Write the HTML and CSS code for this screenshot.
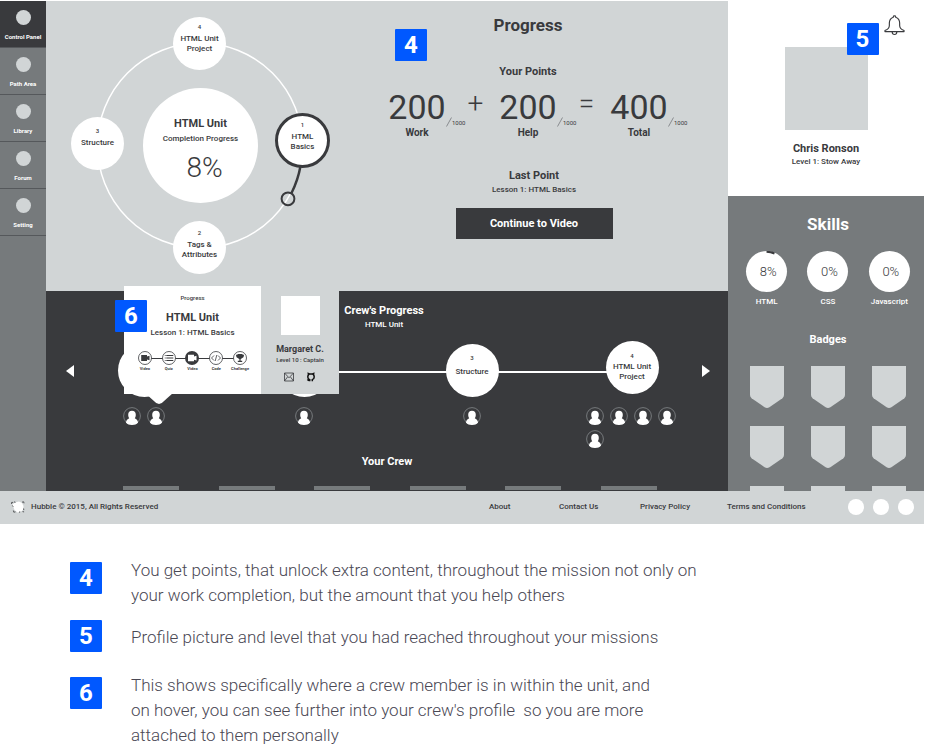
FILE: index.html
```html
<!DOCTYPE html>
<html lang="en">
<head>
<meta charset="utf-8">
<title>Hubble Control Panel</title>
<link rel="stylesheet" href="styles.css">
</head>
<body>
<svg class="defs" aria-hidden="true">
  <symbol id="person" viewBox="0 0 18 18">
    <circle cx="9" cy="9" r="8.4" fill="none" stroke="#76797c" stroke-width="1"/>
    <path fill="#fff" d="M9 3.800c2.400 0 3.800 1.600 3.800 3.900 0 1.500-.4 2.600-1 3.600 1.600.7 2.900 2.200 3.300 4.100C13.600 17.200 11.400 17.900 9 17.900s-4.600-.7-6.100-2.500c.4-1.900 1.700-3.400 3.300-4.100-.6-1-1-2.100-1-3.600C5.200 5.400 6.600 3.800 9 3.800z"/>
  </symbol>
  <symbol id="shield" viewBox="0 0 34 42">
    <path fill="#d1d5d6" d="M0 0h34v29q0 2-1.600 3.200L19.400 41.200q-2.400 1.600-4.800 0L1.600 32.200Q0 31 0 29z"/>
  </symbol>
</svg>

<div class="app">
  <nav class="sidebar" aria-label="Main">
    <a class="nav-item nav-item-active" href="#"><span class="nav-dot"></span>Control Panel</a>
    <a class="nav-item" href="#"><span class="nav-dot"></span>Path Area</a>
    <a class="nav-item" href="#"><span class="nav-dot"></span>Library</a>
    <a class="nav-item" href="#"><span class="nav-dot"></span>Forum</a>
    <a class="nav-item" href="#"><span class="nav-dot"></span>Setting</a>
  </nav>

  <main class="main">
    <section class="overview">
      <div class="orbit">
        <svg class="orbit-lines" viewBox="0 0 294 290" aria-hidden="true">
          <circle cx="154" cy="144.500" r="102.500" fill="none" stroke="#fff" stroke-width="1.500"/>
          <path d="M254.500 165 Q252 179 245.500 192" fill="none" stroke="#393a3d" stroke-width="2.500"/>
          <circle cx="242" cy="197.800" r="6.400" fill="none" stroke="#393a3d" stroke-width="2"/>
        </svg>
        <div class="orbit-core">
          <h2 class="title">HTML Unit</h2>
          <p class="small">Completion Progress</p>
          <p class="percent">8%</p>
        </div>
        <a class="node node-top" href="#"><span class="num">4</span>HTML Unit<br>Project</a>
        <a class="node node-right" href="#"><span class="num">1</span>HTML<br>Basics</a>
        <a class="node node-bottom" href="#"><span class="num">2</span>Tags &amp;<br>Attributes</a>
        <a class="node node-left" href="#"><span class="num">3</span>Structure</a>
      </div>

      <div class="progress">
        <span class="marker marker-points">4</span>
        <div class="progress-head">
          <h1 class="heading">Progress</h1>
          <h2 class="subheading">Your Points</h2>
        </div>
        <div class="stats">
          <div class="stat"><span class="stat-value">200</span><span class="stat-max"><svg viewBox="0 0 6 10" aria-hidden="true"><path d="M.5 9.500 5.500.5"/></svg>1000</span><span class="stat-label">Work</span></div>
          <span class="operator">+</span>
          <div class="stat"><span class="stat-value">200</span><span class="stat-max"><svg viewBox="0 0 6 10" aria-hidden="true"><path d="M.5 9.500 5.500.5"/></svg>1000</span><span class="stat-label">Help</span></div>
          <span class="operator">=</span>
          <div class="stat"><span class="stat-value">400</span><span class="stat-max"><svg viewBox="0 0 6 10" aria-hidden="true"><path d="M.5 9.500 5.500.5"/></svg>1000</span><span class="stat-label">Total</span></div>
        </div>
        <h2 class="subheading">Last Point</h2>
        <p class="small">Lesson 1: HTML Basics</p>
        <button class="continue" type="button">Continue to Video</button>
      </div>
    </section>

    <section class="crew">
      <div class="crew-head">
        <h2 class="subheading">Crew's Progress</h2>
        <p class="small">HTML Unit</p>
      </div>
      <div class="track">
        <button class="arrow arrow-prev" type="button" aria-label="Previous"></button>
        <div class="stages">
          <div class="stage">
            <div class="stage-head"><div class="node"></div></div>
            <div class="avatars">
              <svg><use href="#person"/></svg>
              <svg><use href="#person"/></svg>
            </div>
          </div>
          <div class="stage">
            <div class="stage-head"><div class="node"></div></div>
            <div class="avatars"><svg><use href="#person"/></svg></div>
          </div>
          <div class="stage">
            <div class="stage-head"><div class="node"><span class="num">3</span>Structure</div></div>
            <div class="avatars"><svg><use href="#person"/></svg></div>
          </div>
          <div class="stage stage-raised">
            <div class="stage-head"><div class="node"><span class="num">4</span>HTML Unit<br>Project</div></div>
            <div class="avatars">
              <svg><use href="#person"/></svg>
              <svg><use href="#person"/></svg>
              <svg><use href="#person"/></svg>
              <svg><use href="#person"/></svg>
              <svg><use href="#person"/></svg>
            </div>
          </div>
        </div>
        <button class="arrow arrow-next" type="button" aria-label="Next"></button>
      </div>
      <h2 class="subheading">Your Crew</h2>
      <div class="crew-cards">
        <span></span><span></span><span></span><span></span><span></span><span></span>
      </div>

      <div class="popover">
        <span class="marker marker-crew">6</span>
        <div class="popover-unit">
          <p class="tiny">Progress</p>
          <h3 class="title">HTML Unit</h3>
          <p class="small">Lesson 1: HTML Basics</p>
          <ol class="steps">
            <li><svg viewBox="0 0 14 14"><circle cx="7" cy="7" r="6.500" fill="#fff" stroke="#393a3d" stroke-width=".8"/><path fill="#393a3d" d="M3.200 4h5.800v1.500l2.500-.7v4.400L9 8.500V10H3.200z"/></svg>Video</li>
            <li><svg viewBox="0 0 14 14"><circle cx="7" cy="7" r="6.500" fill="#fff" stroke="#393a3d" stroke-width=".8"/><path stroke="#393a3d" stroke-width="1" d="M2.800 4.500h.8m.7 0h7M2.800 7h.8m.7 0h7M2.800 9.500h.8m.7 0h7"/></svg>Quiz</li>
            <li><svg viewBox="0 0 14 14"><circle cx="7" cy="7" r="7" fill="#393a3d"/><path fill="#fff" d="M3 3.800h6v1.800l2.500-.8v4.700L9 8.800v1.400H3z"/></svg>Video</li>
            <li><svg viewBox="0 0 14 14"><circle cx="7" cy="7" r="6.500" fill="#fff" stroke="#393a3d" stroke-width=".8"/><path fill="none" stroke="#393a3d" stroke-width=".8" d="M5 4.500 2.500 7 5 9.500M9 4.500 11.500 7 9 9.500M7.800 4 6.200 10"/></svg>Code</li>
            <li><svg viewBox="0 0 14 14"><circle cx="7" cy="7" r="6.500" fill="#fff" stroke="#393a3d" stroke-width=".8"/><path fill="#393a3d" d="M4.500 3h5v.8H11c0 2-.8 3.200-2.200 3.500-.3.500-.7.800-1.200 1v1.400h1.600V11H4.800V9.700h1.600V8.300c-.5-.2-.9-.5-1.200-1C3.800 7 3 5.800 3 3.800h1.500z"/></svg>Challenge</li>
          </ol>
        </div>
        <div class="popover-person">
          <div class="popover-photo"></div>
          <h3 class="person-name">Margaret C.</h3>
          <p class="person-level">Level 10 : Captain</p>
          <div class="contacts">
            <a href="#" aria-label="Email"><svg viewBox="0 0 10 10"><path fill="none" stroke="#393a3d" stroke-width=".8" d="M.5 1h9v8h-9zM.5 1 5 5.800 9.500 1M.5 9l3-4M9.500 9l-3-4"/></svg></a>
            <a href="#" aria-label="GitHub"><svg viewBox="0 0 10 10"><path fill="none" stroke="#111" stroke-width="1.500" d="M3.700 9.200V7.600C2.500 7.200 1.800 6.400 1.800 4.900c0-.8.2-1.400.6-1.900L2.300 1.500l1.500.6c.8-.2 1.600-.2 2.400 0l1.500-.6L7.600 3c.4.500.6 1.100.6 1.900 0 1.500-.7 2.300-1.900 2.700v1.600M3.500 8.500C2.300 8.800 1.900 8 1.300 7.500"/></svg></a>
          </div>
        </div>
      </div>
    </section>
  </main>

  <aside class="side">
    <section class="profile">
      <button class="bell" type="button" aria-label="Notifications">
        <svg viewBox="0 0 22 22"><path fill="none" stroke="#393a3d" stroke-width="1.200" stroke-linejoin="round" d="M1 17.400v-1.200c3-1 4.600-2.200 4.600-5.200V8.500c0-3.600 1.600-5.400 4.200-6.200V1.500c0-1 2.400-1 2.400 0v.8c2.600.8 4.200 2.600 4.200 6.200V11c0 3 1.600 4.200 4.600 5.200v1.200zM8.500 17.600c.2 3.800 4.800 3.800 5 0"/></svg>
      </button>
      <div class="photo"><span class="marker marker-profile">5</span></div>
      <h2 class="profile-name">Chris Ronson</h2>
      <p class="small">Level 1: Stow Away</p>
    </section>
    <section class="skills">
      <h2 class="heading">Skills</h2>
      <div class="skill-row">
        <div class="skill"><span class="skill-disc">8%<svg viewBox="0 0 41 41" aria-hidden="true"><path d="M20.500 .8 A19.700 19.700 0 0 1 28.500 2.500" fill="none" stroke="#393a3d" stroke-width="2"/></svg></span>HTML</div>
        <div class="skill"><span class="skill-disc">0%</span>CSS</div>
        <div class="skill"><span class="skill-disc">0%</span>Javascript</div>
      </div>
      <h2 class="subheading">Badges</h2>
      <div class="badges">
        <svg><use href="#shield"/></svg><svg><use href="#shield"/></svg><svg><use href="#shield"/></svg>
        <svg><use href="#shield"/></svg><svg><use href="#shield"/></svg><svg><use href="#shield"/></svg>
        <svg><use href="#shield"/></svg><svg><use href="#shield"/></svg><svg><use href="#shield"/></svg>
      </div>
    </section>
  </aside>

  <footer class="footer">
    <svg class="logo" viewBox="0 0 14 12" aria-hidden="true">
      <path fill="#fff" d="M1.500 3.500 4 1.500l4-1 3 1.500 1.500 3-.5 4-2 1.500-3.500 1L3.500 9z"/>
      <path fill="none" stroke="#55575a" stroke-width="1" d="M.6 3V1.400h1.600M3 .9l1.500.4M11 1.200l1.700-.4.300 1.500M1.400 4.500l.8 1.200M2.400 9.500l.4 1.700 1.700-.3M12.600 7.500l.2 1.600M11.500 10.600l1.600.3M8 11.200l1.200-.3"/>
    </svg>
    <span class="copyright">Hubble © 2015, All Rights Reserved</span>
    <nav class="footer-links" aria-label="Footer">
      <a href="#">About</a><a href="#">Contact Us</a><a href="#">Privacy Policy</a><a href="#">Terms and Conditions</a>
    </nav>
    <div class="social">
      <a href="#" aria-label="Facebook"></a><a href="#" aria-label="Twitter"></a><a href="#" aria-label="Instagram"></a>
    </div>
  </footer>
</div>

<div class="notes">
  <div class="note"><span class="marker">4</span><p>You get points, that unlock extra content, throughout the mission not only on<br>your work completion, but the amount that you help others</p></div>
  <div class="note note-single"><span class="marker">5</span><p>Profile picture and level that you had reached throughout your missions</p></div>
  <div class="note"><span class="marker">6</span><p>This shows specifically where a crew member is in within the unit, and<br>on hover, you can see further into your crew's profile&nbsp; so you are more<br>attached to them personally</p></div>
</div>
</body>
</html>
```
FILE: styles.css
```css
* { box-sizing: border-box; }

body {
  margin: 0;
  background: #fff;
  color: #393a3d;
  font-family: Roboto, "Liberation Sans", sans-serif;
  font-size: 8px;
  line-height: 10px;
}

h1, h2, h3, p, ol { margin: 0; padding: 0; }
a { color: inherit; text-decoration: none; }
button { border: 0; padding: 0; font: inherit; cursor: pointer; }
svg { display: block; }
.defs { position: absolute; width: 0; height: 0; }

/* Shared text */
.heading { font-size: 17px; line-height: 20px; font-weight: 700; }
.subheading { font-size: 11px; line-height: 16px; font-weight: 700; }
.title { font-size: 11px; line-height: 18px; font-weight: 700; }
.small { font-size: 8px; line-height: 12px; font-weight: 500; }
.tiny { font-size: 6px; line-height: 8px; font-weight: 500; }

.marker {
  display: flex;
  align-items: center;
  justify-content: center;
  flex: none;
  width: 32px;
  height: 32px;
  border-radius: 1px;
  background: #0058ff;
  color: #fff;
  font-size: 24px;
  line-height: 32px;
  font-weight: 700;
}

/* Frame */
.app {
  display: grid;
  grid-template-columns: 46px 1fr 196px;
  margin-right: 2px;
  padding-top: 1px;
}

.sidebar { background: #767a7c; color: #fff; }
.nav-item {
  display: flex;
  flex-direction: column;
  align-items: center;
  gap: 8px;
  height: 47px;
  padding-top: 9px;
  border-bottom: 1px solid #55585b;
  font-size: 6px;
  line-height: 8px;
  font-weight: 700;
  white-space: nowrap;
}
.nav-item-active { background: #393a3d; }
.nav-dot { width: 15px; height: 15px; border-radius: 50%; background: #d1d5d6; }

/* Unit overview */
.overview { display: flex; height: 290px; background: #d1d5d6; }
.orbit { position: relative; flex: none; width: 294px; height: 290px; text-align: center; }
.orbit-lines { width: 294px; height: 290px; }

.node {
  display: flex;
  flex-direction: column;
  align-items: center;
  justify-content: center;
  width: 53px;
  height: 53px;
  border-radius: 50%;
  background: #fff;
  color: #393a3d;
  font-weight: 500;
  text-align: center;
  white-space: nowrap;
}
.num { font-size: 6px; line-height: 12px; }
.orbit .node { position: absolute; display: block; padding: 4px 0 0; }
.orbit .num { display: block; margin-bottom: 1px; }
.orbit .node-top { left: 127px; top: 16px; }
.orbit .node-bottom { left: 127px; top: 220px; padding-top: 6px; }
.orbit .node-left { left: 25px; top: 116px; padding-top: 8px; }
.orbit .node-right { left: 229px; top: 112px; width: 55px; height: 55px; border: 3px solid #393a3d; padding-top: 3px; }
.orbit-core {
  position: absolute;
  left: 97px;
  top: 87px;
  width: 115px;
  height: 115px;
  padding-top: 27px;
  border-radius: 50%;
  background: #fff;
}
.percent { margin-top: 6px; padding-left: 8px; font-size: 28px; line-height: 34px; font-weight: 300; }

.progress { position: relative; flex: 1; padding-top: 14px; text-align: center; }
.marker-points { position: absolute; left: 55px; top: 28px; }
.progress-head { display: flex; flex-direction: column; gap: 29px; padding-right: 12px; }
.stats { display: flex; justify-content: center; padding-left: 8px; margin: 7px 0 29px; }
.stat { display: grid; grid-template-columns: 58px 20px; }
.stat-value { font-size: 34px; line-height: 40px; text-align: center; }
.stat-max { align-self: end; display: flex; align-items: flex-end; font-size: 6px; line-height: 8px; }
.stat-max svg { flex: none; width: 6px; height: 10px; fill: none; stroke: #76797c; stroke-width: .8; }
.stat-label { font-size: 10px; line-height: 12px; font-weight: 700; text-align: center; }
.operator { width: 33px; padding-right: 14px; font-size: 28px; line-height: 34px; font-weight: 300; }
.continue {
  width: 157px;
  height: 31px;
  margin-top: 12px;
  background: #393a3d;
  color: #fff;
  font-size: 11px;
  font-weight: 700;
}

/* Crew progress */
.crew { position: relative; height: 200px; background: #393a3d; color: #fff; text-align: center; }
.crew-head { padding: 12px 6px 0 0; }
.track { display: flex; gap: 22px; padding: 10px 18px 0 20px; }
.arrow { flex: none; width: 8px; height: 12px; margin-top: 24px; background: #fff; }
.arrow-prev { clip-path: polygon(100% 0, 100% 100%, 0 50%); }
.arrow-next { clip-path: polygon(0 0, 100% 50%, 0 100%); }
.stages {
  position: relative;
  flex: 1;
  display: grid;
  grid-template-columns: 96px 64fr 96px 72fr 96px 64fr 96px;
}
.stages::before {
  content: "";
  position: absolute;
  left: 48px;
  right: 48px;
  top: 30px;
  height: 2px;
  background: #fff;
}
.stage { position: relative; grid-row: 1; }
.stage:nth-child(1) { grid-column: 1; }
.stage:nth-child(2) { grid-column: 3; }
.stage:nth-child(3) { grid-column: 5; }
.stage:nth-child(4) { grid-column: 7; }
.stage-head { display: flex; align-items: flex-end; justify-content: center; height: 56px; }
.stage .node { padding-bottom: 16px; }
.stage .num { line-height: 18px; }
.stage-raised .stage-head { align-items: flex-start; }
.stage-raised .node { padding-bottom: 4px; }
.stage-raised .num { line-height: 12px; }
.avatars { display: flex; flex-wrap: wrap; gap: 5px 6px; width: max-content; max-width: 92px; margin: 10px auto 0; }
.avatars svg { width: 18px; height: 18px; }
.crew > .subheading { margin-top: 6px; }
.crew-cards { display: flex; justify-content: space-between; height: 4px; margin: 16px 71px 0 77px; overflow: hidden; }
.crew-cards span { width: 56px; height: 56px; background: #767a7c; }

.popover {
  position: absolute;
  left: 78px;
  top: -5px;
  display: flex;
  height: 108px;
  color: #393a3d;
}
.popover::after {
  content: "";
  position: absolute;
  left: 21px;
  top: 107px;
  width: 28px;
  height: 11px;
  background: #fff;
  clip-path: polygon(0 0, 100% 0, 60% 90%, 50% 100%, 40% 90%);
}
.marker-crew { position: absolute; left: -9px; top: 14px; }
.popover-unit { width: 137px; padding-top: 8px; background: #fff; }
.popover-unit .title { margin-top: 7px; }
.steps { position: relative; display: flex; justify-content: space-between; margin: 12px 9px 0; list-style: none; }
.steps::before { content: ""; position: absolute; left: 12px; right: 12px; top: 7px; height: 1px; background: #393a3d; }
.steps li { position: relative; width: 24px; font-size: 4px; line-height: 8px; font-weight: 700; }
.steps svg { width: 14px; height: 14px; margin: 0 auto; }
.popover-person { width: 78px; padding-top: 10px; background: #d1d5d6; }
.popover-photo { width: 39px; height: 39px; margin: 0 auto 8px; background: #fff; }
.person-name { font-size: 9px; line-height: 12px; font-weight: 700; }
.person-level { font-size: 6px; line-height: 10px; font-weight: 500; white-space: nowrap; }
.contacts { display: flex; justify-content: center; gap: 12px; margin-top: 7px; }
.contacts svg { width: 10px; height: 10px; }

/* Profile and skills */
.side { display: flex; flex-direction: column; text-align: center; }
.profile { position: relative; height: 195px; padding-top: 46px; background: #fff; }
.bell { position: absolute; right: 19px; top: 14px; background: none; }
.bell svg { width: 21px; height: 21px; }
.photo { position: relative; width: 83px; height: 83px; margin: 0 auto 12px; background: #d1d5d6; }
.marker-profile { position: absolute; right: -11px; top: -24px; }
.profile-name { font-size: 11px; line-height: 14px; font-weight: 700; }
.skills { flex: 1; padding: 18px 4px 0 8px; background: #767a7c; color: #fff; }
.skill-row { display: grid; grid-template-columns: repeat(3, 1fr); margin: 17px 0 25px; }
.skill { display: flex; flex-direction: column; align-items: center; gap: 5px; font-weight: 500; }
.skill-disc {
  position: relative;
  width: 41px;
  height: 41px;
  padding-left: 3px;
  border-radius: 50%;
  background: #fff;
  color: #393a3d;
  font-size: 13px;
  line-height: 41px;
  font-weight: 300;
}
.skill-disc svg { position: absolute; inset: 0; }
.badges {
  display: grid;
  grid-template-columns: repeat(3, 1fr);
  justify-items: center;
  gap: 18px 0;
  height: 125px;
  margin-top: 18px;
  overflow: hidden;
}
.badges svg { width: 34px; height: 42px; }

/* Footer */
.footer {
  grid-column: 1 / -1;
  display: flex;
  align-items: center;
  height: 33px;
  padding: 0 10px 2px 11px;
  background: #d1d5d6;
  font-weight: 500;
}
.logo { width: 14px; height: 12px; margin-right: 6px; }
.footer-links { display: grid; grid-template-columns: 70px 81px 87px 121px; margin-left: auto; white-space: nowrap; }
.social { display: flex; gap: 9px; }
.social a { width: 16px; height: 16px; border-radius: 50%; background: #fff; }

/* Annotations */
.notes { padding: 34px 70px 0; color: #4a4854; }
.note { display: flex; gap: 29px; font-size: 17px; line-height: 25px; font-weight: 300; }
.note p { margin-bottom: -2px; }
.note .marker { margin-top: 4px; }
.note-single { align-items: center; margin: 14px 0 21px; }
.note-single .marker { margin-top: 0; }
```
